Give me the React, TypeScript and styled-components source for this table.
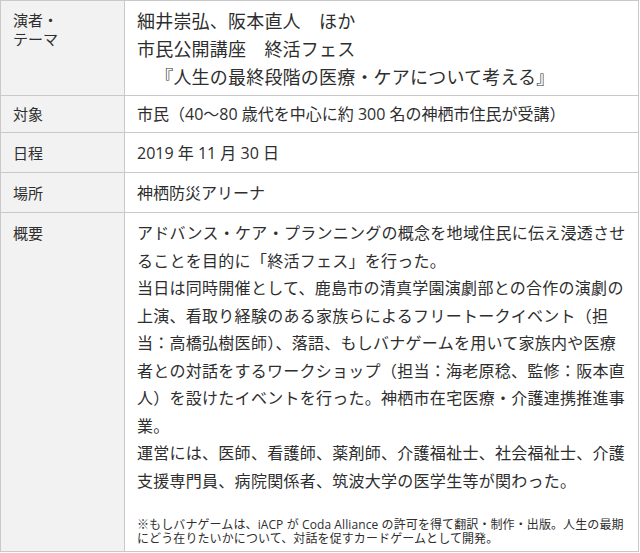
import React from "react";
import styled, { createGlobalStyle } from "styled-components";

const GlobalStyle = createGlobalStyle`
  body {
    margin: 0;
    background: #fff;
    font-family: "Open Sans", "Noto Sans CJK JP", sans-serif;
    color: #2e2e2e;
  }
`;

const Table = styled.table`
  width: 639px;
  border-collapse: collapse;
  border: 1px solid #c9c9c9;
`;

const Label = styled.th<{ $pad?: string }>`
  width: 99px;
  padding: ${(p) => p.$pad || "10px 12px 6px"};
  background: #f2f2f2;
  border: 1px solid #c9c9c9;
  text-align: left;
  vertical-align: top;
  font-weight: normal;
  font-size: 15px;
  line-height: 19px;
  color: #2e2e2e;
`;

const Cell = styled.td<{ $pad?: string; $size?: number; $spacing?: number }>`
  padding: ${(p) => p.$pad || "6px 12px 5px"};
  border: 1px solid #c9c9c9;
  vertical-align: top;
  font-size: ${(p) => p.$size || 16}px;
  line-height: 28px;
  letter-spacing: ${(p) => (p.$spacing ?? 0.27)}px;
  color: #2e2e2e;
`;

const Line = styled.div<{ $indent?: number }>`
  white-space: nowrap;
  padding-left: ${(p) => p.$indent || 0}px;
`;

const Para = styled.p`
  margin: 0;
  line-height: 27.5px;
`;

const Note = styled.p`
  margin: 23px 0 0;
  font-size: 12px;
  line-height: 14px;
  letter-spacing: 0.1px;
`;

export default function App() {
  return (
    <>
      <GlobalStyle />
      <Table>
        <tbody>
          <tr>
            <Label $pad="10px 12px 4px">
              演者・
              <br />
              テーマ
            </Label>
            <Cell $pad="6px 12px 4px" $size={18} $spacing={0.2}>
              <Line>細井崇弘、阪本直人　ほか</Line>
              <Line>市民公開講座　終活フェス</Line>
              <Line $indent={9}>　『人生の最終段階の医療・ケアについて考える』</Line>
            </Cell>
          </tr>
          <tr>
            <Label $pad="9px 12px 4px">対象</Label>
            <Cell $pad="4px 12px 4px" $spacing={0}>
              市民（40～80 歳代を中心に約 300 名の神栖市住民が受講）
            </Cell>
          </tr>
          <tr>
            <Label $pad="11px 12px 5px">日程</Label>
            <Cell $pad="6px 12px 5px" $spacing={0}>2019 年 11 月 30 日</Cell>
          </tr>
          <tr>
            <Label $pad="11px 12px 5px">場所</Label>
            <Cell $pad="6px 12px 5px" $spacing={0}>神栖防災アリーナ</Cell>
          </tr>
          <tr>
            <Label $pad="11px 12px 6px">概要</Label>
            <Cell $pad="7px 12px 5px">
              <Para>アドバンス・ケア・プランニングの概念を地域住民に伝え浸透させることを目的に「終活フェス」を行った。</Para>
              <Para>
                当日は同時開催として、鹿島市の清真学園演劇部との合作の演劇の上演、看取り経験のある家族らによるフリートークイベント（担当：高橋弘樹医師）、落語、もしバナゲームを用いて家族内や医療者との対話をするワークショップ（担当：海老原稔、監修：阪本直人）を設けたイベントを行った。神栖市在宅医療・介護連携推進事業。
              </Para>
              <Para>運営には、医師、看護師、薬剤師、介護福祉士、社会福祉士、介護支援専門員、病院関係者、筑波大学の医学生等が関わった。</Para>
              <Note>
                ※もしバナゲームは、iACP が Coda Alliance の許可を得て翻訳・制作・出版。人生の最期にどう在りたいかについて、対話を促すカードゲームとして開発。
              </Note>
            </Cell>
          </tr>
        </tbody>
      </Table>
    </>
  );
}
